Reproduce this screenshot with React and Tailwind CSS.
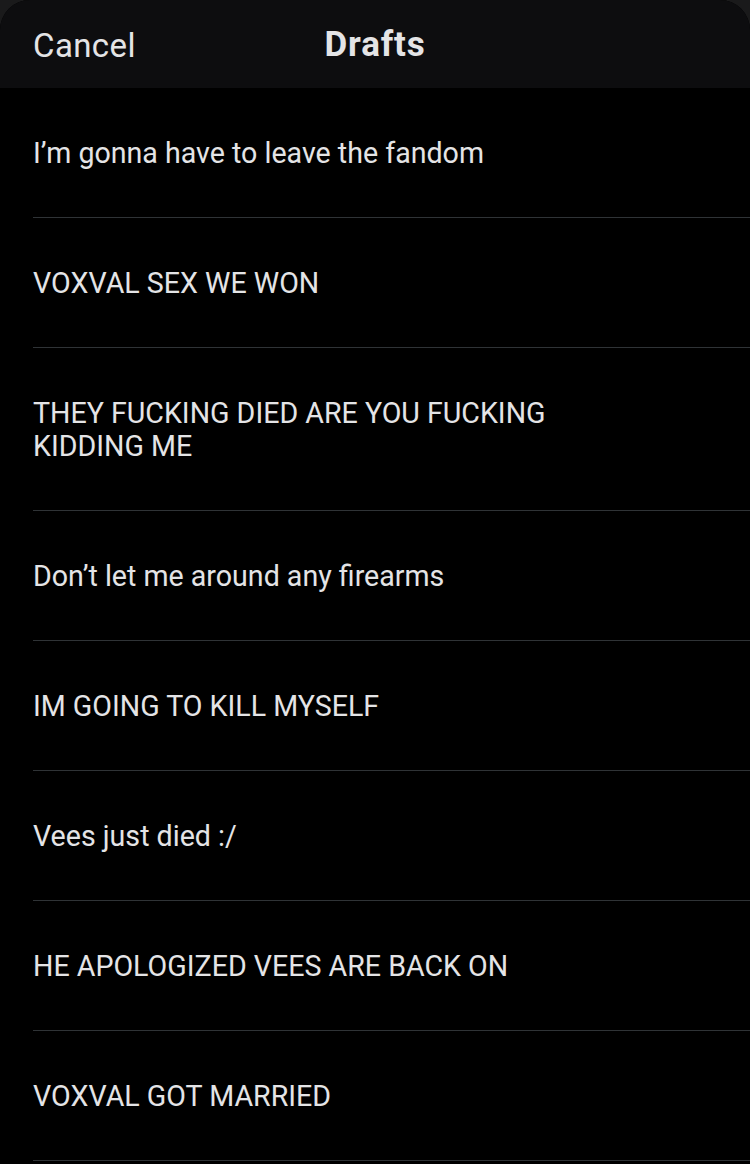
export default function App() {
  const drafts = [
    "I’m gonna have to leave the fandom",
    "VOXVAL SEX WE WON",
    "THEY FUCKING DIED ARE YOU FUCKING KIDDING ME",
    "Don’t let me around any firearms",
    "IM GOING TO KILL MYSELF",
    "Vees just died :/",
    "HE APOLOGIZED VEES ARE BACK ON",
    "VOXVAL GOT MARRIED",
  ];
  return (
    <div className="w-[750px] h-[1164px] overflow-hidden bg-[#1a1a1b]" style={{ fontFamily: 'Roboto, "Liberation Sans", Arial, sans-serif' }}>
      <div className="rounded-t-[30px] bg-black h-full">
        <div className="h-[88px] rounded-t-[30px] bg-[#0d0d0f] flex items-center relative px-[33px] pt-[3px]">
          <span className="text-[33px] text-[#e4e4e6] tracking-[0.4px]">Cancel</span>
          <span className="absolute left-0 right-0 text-center text-[35px] font-bold text-[#e4e4e6] tracking-[0.8px] pointer-events-none">Drafts</span>
        </div>
        <div className="pl-[33px]">
          {drafts.map((d, i) => (
            <div key={i} className="border-b border-[#2f3336] pt-[49px] pb-[47px] pr-[150px]">
              <p className="text-[28.6px] leading-[33px] text-[#e4e4e6]">{d}</p>
            </div>
          ))}
        </div>
      </div>
    </div>
  );
}
